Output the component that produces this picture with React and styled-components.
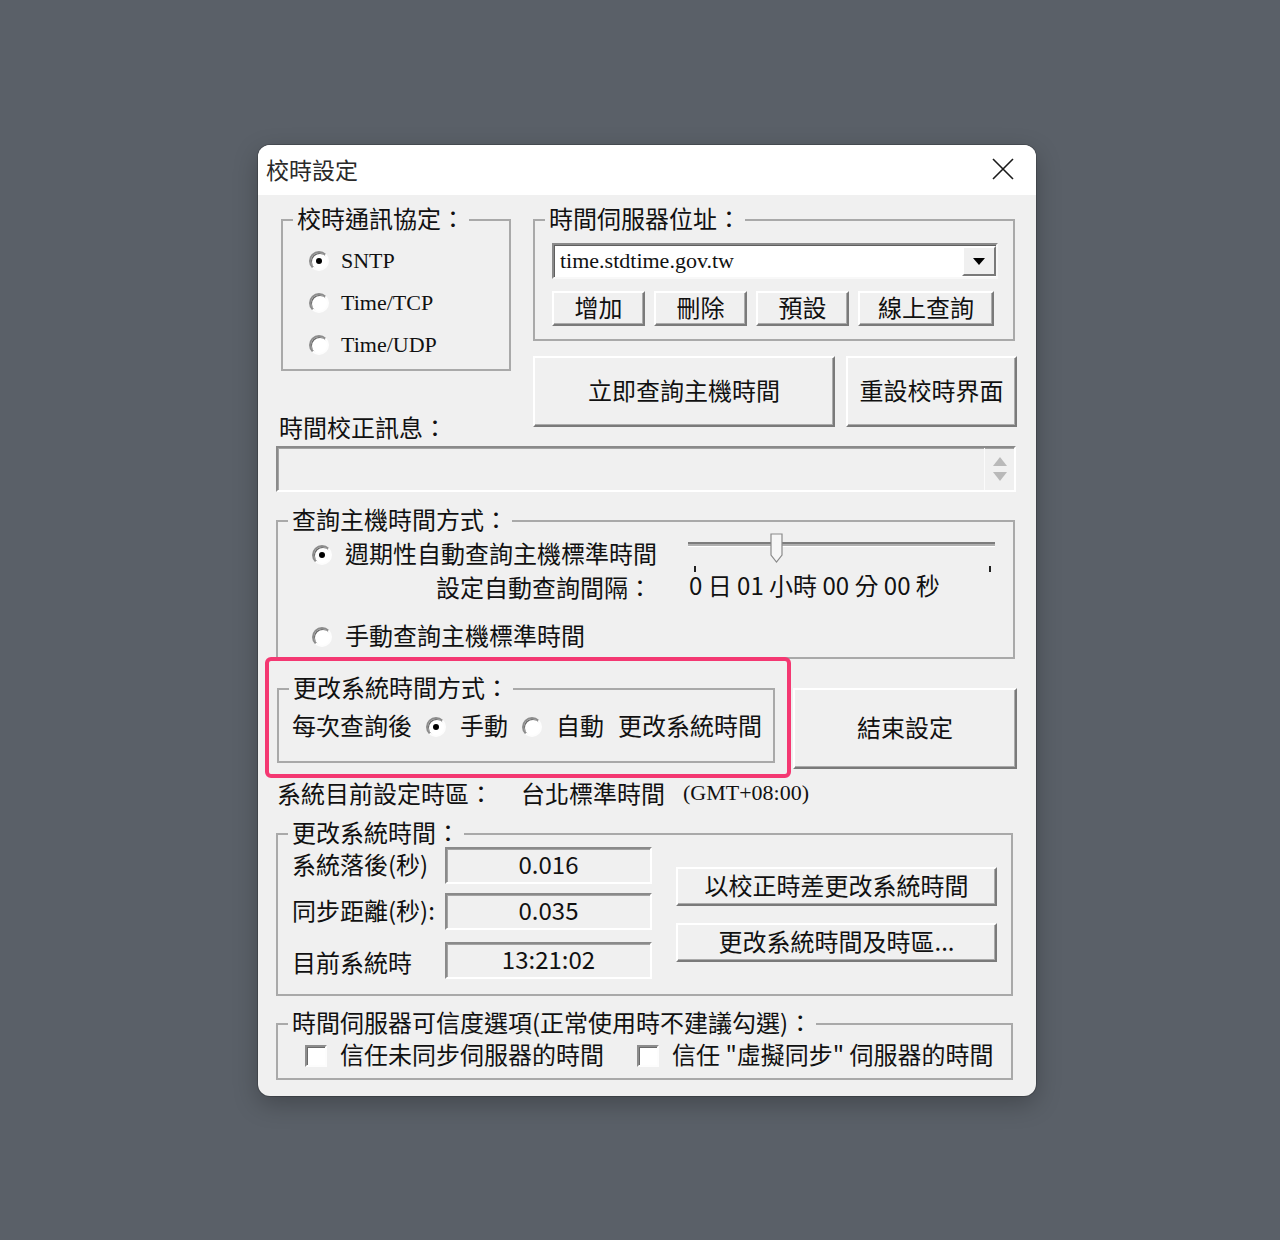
import React from "react";
import styled, { createGlobalStyle } from "styled-components";

const GlobalStyle = createGlobalStyle`
  *, *::before, *::after { box-sizing: border-box; }
  html, body { margin: 0; padding: 0; }
  body {
    background: #5a6068;
    font-family: "Noto Sans CJK TC", "Noto Sans", sans-serif;
    color: #111;
  }
`;

const Page = styled.div`
  min-height: 1240px;
  padding: 145px 0 0 258px;
`;

const Window = styled.div`
  width: 778px;
  height: 951px;
  background: #f0f0f0;
  border-radius: 12px;
  overflow: hidden;
  box-shadow: 0 0 0 1px rgba(0, 0, 0, 0.18), 0 8px 24px rgba(0, 0, 0, 0.25);
`;

const TitleBar = styled.div`
  height: 50px;
  background: #fff;
  display: flex;
  align-items: center;
  justify-content: space-between;
  padding: 0 22px 3px 8px;
  font-size: 23px;
  color: #2a2a2a;
`;

const Body = styled.div`
  padding: 12px 19px 17px 18px;
  font-size: 24px;
  line-height: 26px;
`;

const TopSection = styled.div`
  display: grid;
  grid-template-columns: 240px 484px;
  column-gap: 17px;
`;

const Column = styled.div`
  display: flex;
  flex-direction: column;
  align-items: flex-start;
`;

const Group = styled.fieldset`
  margin: 0;
  min-width: 0;
  width: ${(p) => p.$w}px;
  padding: ${(p) => p.$pad};
  border: 2px solid #a9a9a9;
`;

const Legend = styled.legend`
  margin-left: 0;
  padding: 0 4px 4px;
  font-size: 24px;
  line-height: 22px;
`;

const Caption = styled.span`
  margin-bottom: 4px;
`;

const RadioDot = styled.span`
  flex: none;
  width: 20px;
  height: 20px;
  border-radius: 50%;
  border: 2px solid;
  border-color: #8c8c8c #fdfdfd #fdfdfd #8c8c8c;
  background: #fff;
  box-shadow: inset 1px 1px 0 #6a6a6a;
  display: grid;
  place-items: center;

  &::after {
    content: "";
    width: 6px;
    height: 6px;
    border-radius: 50%;
    background: ${(p) => (p.$on ? "#000" : "transparent")};
  }
`;

const CheckBox = styled.span`
  flex: none;
  width: 22px;
  height: 22px;
  border: 2px solid;
  border-color: #8c8c8c #fdfdfd #fdfdfd #8c8c8c;
  background: #fff;
  box-shadow: inset 1px 1px 0 #6a6a6a;
`;

const ProtoRow = styled.div`
  display: flex;
  align-items: center;
  height: 42px;
  gap: 12px;
  padding-left: 16px;
  font-family: "Liberation Serif", serif;
  font-size: 22px;
`;

const PlainLabel = styled.div`
  margin: ${(p) => p.$m || "0"};
  height: 26px;
  white-space: nowrap;
`;

const Combo = styled.div`
  display: flex;
  align-items: center;
  width: 446px;
  height: 36px;
  margin: 10px 0 0 7px;
  background: #fff;
  border: 2px solid;
  border-color: #8a8a8a #f8f8f8 #f8f8f8 #8a8a8a;
  box-shadow: inset 1px 1px 0 #5f5f5f;
`;

const ComboText = styled.span`
  flex: 1;
  padding-left: 6px;
  font-family: "Liberation Serif", serif;
  font-size: 22px;
`;

const DropButton = styled.span`
  width: 34px;
  height: 30px;
  background: #f0f0f0;
  border: 2px solid;
  border-color: #fff #7a7a7a #7a7a7a #fff;
  display: grid;
  place-items: center;
`;

const ButtonRow = styled.div`
  display: flex;
  gap: 9px;
  margin: 12px 0 0 7px;
`;

const Button = styled.button`
  font: inherit;
  font-size: 24px;
  line-height: 26px;
  color: #111;
  background: #f0f0f0;
  padding: 0 0 4px;
  white-space: nowrap;
  border: 2px solid;
  border-color: #fff #7a7a7a #7a7a7a #fff;
  box-shadow: inset -1px -1px 0 #ababab;
  width: ${(p) => (p.$w ? `${p.$w}px` : "100%")};
  height: ${(p) => p.$h}px;
  margin-top: ${(p) => p.$mt || 0}px;
`;

const BigButtons = styled.div`
  display: grid;
  grid-template-columns: 302px 171px;
  column-gap: 11px;
  margin-top: 15px;
  width: 100%;
`;

const MessageBox = styled.div`
  display: flex;
  justify-content: flex-end;
  width: 740px;
  height: 46px;
  margin-top: 6px;
  border: 2px solid;
  border-color: #8a8a8a #fff #fff #8a8a8a;
  box-shadow: inset 1px 1px 0 #a3a3a3;
`;

const ScrollArrows = styled.div`
  width: 30px;
  border-left: 1px solid #fbfbfb;
  display: flex;
  flex-direction: column;
  align-items: center;
  justify-content: center;
  gap: 6px;
`;

const QueryGroupWrap = styled.div`
  margin-top: 16px;
`;

const QueryGrid = styled.div`
  display: grid;
  grid-template-columns: 364px 307px;
  column-gap: 36px;
  margin-top: 6px;
`;

const OptionRow = styled.div`
  display: flex;
  align-items: center;
  height: 30px;
  gap: 13px;
  padding-left: 24px;
  margin-top: ${(p) => p.$mt || 0}px;
  white-space: nowrap;
`;

const IntervalLabel = styled.div`
  height: 30px;
  line-height: 28px;
  margin-top: 3px;
  text-align: right;
`;

const SliderCol = styled.div`
  margin-top: -6px;
`;

const SliderValue = styled.div`
  line-height: 24px;
  margin-top: -1px;
  padding-left: 1px;
  white-space: nowrap;
`;

const ChangeRow = styled.div`
  display: grid;
  grid-template-columns: 498px 224px;
  column-gap: 18px;
  align-items: start;
  margin: 17px 0 0 1px;
`;

const Highlight = styled.div`
  position: relative;

  &::after {
    content: "";
    position: absolute;
    top: -19px;
    left: -12px;
    right: -16px;
    bottom: -15px;
    border: 4px solid #f43872;
    border-radius: 6px;
    pointer-events: none;
  }
`;

const ModeRow = styled.div`
  display: flex;
  align-items: center;
  height: 30px;
  gap: 14px;
  padding-left: 3px;
  white-space: nowrap;
`;

const ZoneRow = styled.div`
  display: flex;
  height: 26px;
  margin: 11px 0 0 1px;
  white-space: nowrap;
`;

const ZoneText = styled.span`
  margin-left: ${(p) => p.$ml || 0}px;
  font-family: ${(p) =>
    p.$latin ? '"Liberation Serif", serif' : "inherit"};
  font-size: ${(p) => (p.$latin ? 22 : 24)}px;
`;

const SectionGap = styled.div`
  margin-top: ${(p) => p.$mt}px;
`;

const SystemGrid = styled.div`
  display: grid;
  grid-template-columns: 157px 207px 1fr;
  grid-template-rows: 37px 46px 49px;
  align-items: end;
`;

const FieldLabel = styled.div`
  grid-column: 1;
  grid-row: ${(p) => p.$row};
  height: 37px;
  line-height: 33px;
  padding-left: 4px;
  white-space: nowrap;
  transform: translateY(${(p) => p.$dy || 0}px);
`;

const ValueField = styled.div`
  grid-column: 2;
  grid-row: ${(p) => p.$row};
  height: 37px;
  display: flex;
  align-items: center;
  justify-content: center;
  padding-bottom: 4px;
  border: 2px solid;
  border-color: #8a8a8a #fff #fff #8a8a8a;
  box-shadow: inset 1px 1px 0 #a3a3a3;
`;

const SideButtons = styled.div`
  grid-column: 3;
  grid-row: 1 / span 3;
  align-self: start;
  display: flex;
  flex-direction: column;
  gap: 17px;
  padding: 20px 0 0 24px;
`;

const TrustRow = styled.div`
  display: flex;
  align-items: center;
  height: 30px;
  padding-left: 17px;
  white-space: nowrap;
`;

const TrustItem = styled.div`
  display: flex;
  align-items: center;
  gap: 13px;
  margin-left: ${(p) => p.$ml || 0}px;
`;

const CloseIcon = () => (
  <svg width="22" height="22" viewBox="0 0 22 22">
    <path d="M1 1 L21 21 M21 1 L1 21" stroke="#1a1a1a" strokeWidth="1.6" />
  </svg>
);

const Slider = () => (
  <svg width="307" height="40" viewBox="0 0 307 40" style={{ display: "block", overflow: "visible" }}>
    <rect x="0" y="8" width="307" height="2" fill="#7d7d7d" />
    <rect x="0" y="10" width="307" height="2" fill="#b0b0b0" />
    <rect x="0" y="12" width="307" height="1" fill="#fff" />
    <polygon
      points="83,0 94,0 94,21 88.5,28 83,21"
      fill="#f6f6f6"
      stroke="#8a8a8a"
      strokeWidth="1.2"
    />
    <rect x="6" y="32" width="2" height="6" fill="#222" />
    <rect x="301" y="32" width="2" height="6" fill="#222" />
  </svg>
);

const Triangle = ({ up }) => (
  <svg width="14" height="9" viewBox="0 0 14 9">
    <polygon points={up ? "7,0 14,9 0,9" : "0,0 14,0 7,9"} fill="#b9b9b9" />
  </svg>
);

export default function App() {
  return (
    <>
      <GlobalStyle />
      <Page>
        <Window>
          <TitleBar>
            <span>校時設定</span>
            <CloseIcon />
          </TitleBar>
          <Body>
            <TopSection>
              <Column>
                <Group $w={230} $pad="7px 10px 3px" style={{ marginLeft: 5 }}>
                  <Legend>校時通訊協定：</Legend>
                  <ProtoRow>
                    <RadioDot $on />
                    <span>SNTP</span>
                  </ProtoRow>
                  <ProtoRow>
                    <RadioDot />
                    <span>Time/TCP</span>
                  </ProtoRow>
                  <ProtoRow>
                    <RadioDot />
                    <span>Time/UDP</span>
                  </ProtoRow>
                </Group>
                <PlainLabel $m="43px 0 0 3px">時間校正訊息：</PlainLabel>
              </Column>
              <Column>
                <Group $w={482} $pad="0 10px 13px">
                  <Legend>時間伺服器位址：</Legend>
                  <Combo>
                    <ComboText>time.stdtime.gov.tw</ComboText>
                    <DropButton>
                      <svg width="12" height="7" viewBox="0 0 12 7">
                        <polygon points="0,0 12,0 6,7" fill="#000" />
                      </svg>
                    </DropButton>
                  </Combo>
                  <ButtonRow>
                    <Button $w={93} $h={35}>增加</Button>
                    <Button $w={93} $h={35}>刪除</Button>
                    <Button $w={93} $h={35}>預設</Button>
                    <Button $w={136} $h={35}>線上查詢</Button>
                  </ButtonRow>
                </Group>
                <BigButtons>
                  <Button $h={71}>立即查詢主機時間</Button>
                  <Button $h={71}>重設校時界面</Button>
                </BigButtons>
              </Column>
            </TopSection>

            <MessageBox>
              <ScrollArrows>
                <Triangle up />
                <Triangle />
              </ScrollArrows>
            </MessageBox>

            <QueryGroupWrap>
              <Group $w={739} $pad="0 10px 5px">
                <Legend>查詢主機時間方式：</Legend>
                <QueryGrid>
                  <div>
                    <OptionRow>
                      <RadioDot $on />
                      <Caption>週期性自動查詢主機標準時間</Caption>
                    </OptionRow>
                    <IntervalLabel>設定自動查詢間隔：</IntervalLabel>
                  </div>
                  <SliderCol>
                    <Slider />
                    <SliderValue>0 日 01 小時 00 分 00 秒</SliderValue>
                  </SliderCol>
                </QueryGrid>
                <OptionRow $mt={19}>
                  <RadioDot />
                  <Caption>手動查詢主機標準時間</Caption>
                </OptionRow>
              </Group>
            </QueryGroupWrap>

            <ChangeRow>
              <Highlight>
                <Group $w={498} $pad="10px 10px 19px">
                  <Legend>更改系統時間方式：</Legend>
                  <ModeRow>
                    <Caption>每次查詢後</Caption>
                    <RadioDot $on />
                    <Caption>手動</Caption>
                    <RadioDot />
                    <Caption>自動</Caption>
                    <Caption>更改系統時間</Caption>
                  </ModeRow>
                </Group>
              </Highlight>
              <Button $h={81} $mt={12}>結束設定</Button>
            </ChangeRow>

            <ZoneRow>
              <ZoneText>系統目前設定時區：</ZoneText>
              <ZoneText $ml={28}>台北標準時間</ZoneText>
              <ZoneText $ml={18} $latin>(GMT+08:00)</ZoneText>
            </ZoneRow>

            <SectionGap $mt={15}>
              <Group $w={737} $pad="0 10px 15px">
                <Legend>更改系統時間：</Legend>
                <SystemGrid>
                  <FieldLabel $row={1}>系統落後(秒)</FieldLabel>
                  <ValueField $row={1}>0.016</ValueField>
                  <FieldLabel $row={2}>同步距離(秒):</FieldLabel>
                  <ValueField $row={2}>0.035</ValueField>
                  <FieldLabel $row={3} $dy={3}>目前系統時</FieldLabel>
                  <ValueField $row={3}>13:21:02</ValueField>
                  <SideButtons>
                    <Button $w={321} $h={39}>以校正時差更改系統時間</Button>
                    <Button $w={321} $h={39}>更改系統時間及時區...</Button>
                  </SideButtons>
                </SystemGrid>
              </Group>
            </SectionGap>

            <SectionGap $mt={15}>
              <Group $w={737} $pad="4px 10px 7px">
                <Legend>時間伺服器可信度選項(正常使用時不建議勾選)：</Legend>
                <TrustRow>
                  <TrustItem>
                    <CheckBox />
                    <Caption>信任未同步伺服器的時間</Caption>
                  </TrustItem>
                  <TrustItem $ml={33}>
                    <CheckBox />
                    <Caption>信任 "虛擬同步" 伺服器的時間</Caption>
                  </TrustItem>
                </TrustRow>
              </Group>
            </SectionGap>
          </Body>
        </Window>
      </Page>
    </>
  );
}
